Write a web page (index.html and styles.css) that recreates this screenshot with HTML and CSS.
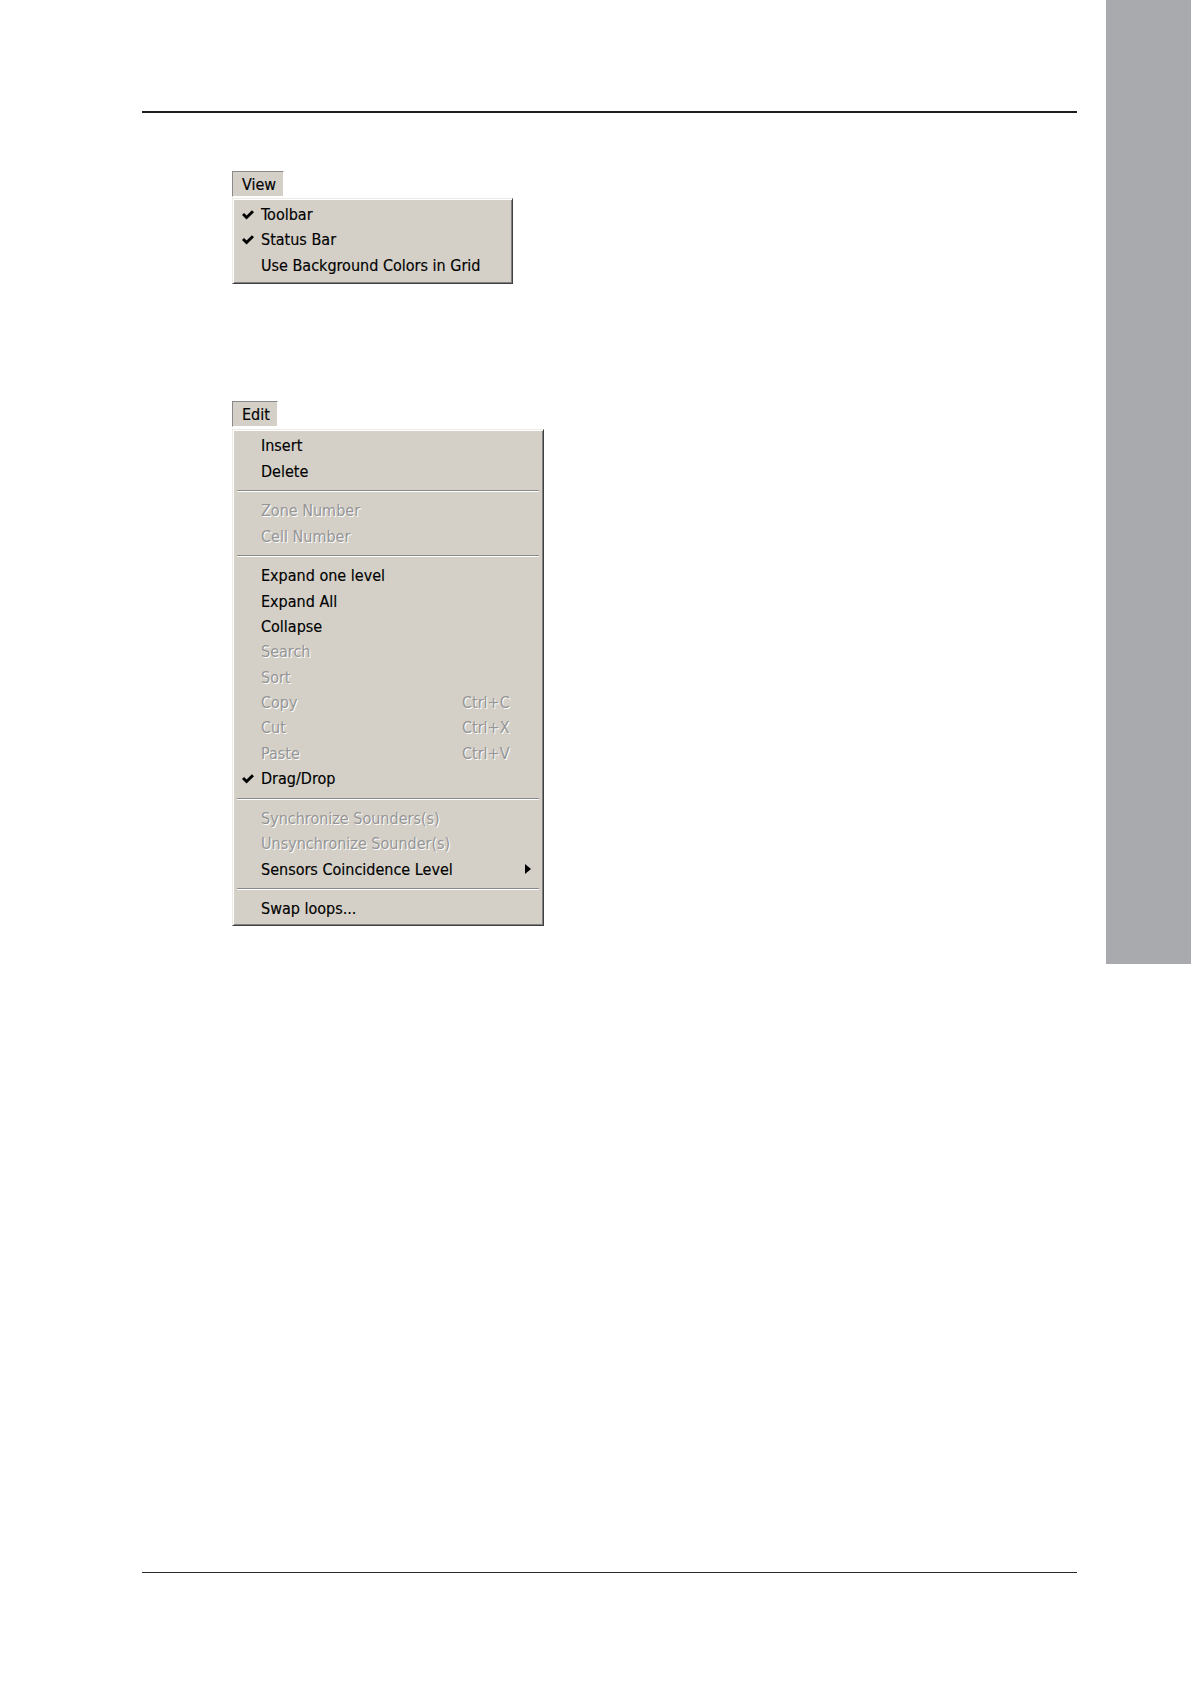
FILE: index.html
```html
<!DOCTYPE html>
<html lang="en">
<head>
<meta charset="utf-8">
<title>View and Edit menus</title>
<link rel="stylesheet" href="styles.css">
</head>
<body>
<div class="page">
  <main class="content">
    <div class="rule rule-top"></div>

    <figure class="menu-shot shot-view">
      <div class="menu-tab">View</div>
      <div class="menu menu-view">
        <div class="item"><span class="check"><svg viewBox="0 0 10 8" width="12" height="10"><polygon points="0,4 1.7,2.3 3.8,4.4 8.3,0 10,1.7 3.8,7.8"/></svg></span><span class="label">Toolbar</span></div>
        <div class="item"><span class="check"><svg viewBox="0 0 10 8" width="12" height="10"><polygon points="0,4 1.7,2.3 3.8,4.4 8.3,0 10,1.7 3.8,7.8"/></svg></span><span class="label">Status Bar</span></div>
        <div class="item"><span class="label">Use Background Colors in Grid</span></div>
      </div>
    </figure>

    <figure class="menu-shot shot-edit">
      <div class="menu-tab">Edit</div>
      <div class="menu menu-edit">
        <div class="item"><span class="label">Insert</span></div>
        <div class="item"><span class="label">Delete</span></div>
        <div class="sep"></div>
        <div class="item disabled"><span class="label">Zone Number</span></div>
        <div class="item disabled"><span class="label">Cell Number</span></div>
        <div class="sep"></div>
        <div class="item"><span class="label">Expand one level</span></div>
        <div class="item"><span class="label">Expand All</span></div>
        <div class="item"><span class="label">Collapse</span></div>
        <div class="item disabled"><span class="label">Search</span></div>
        <div class="item disabled"><span class="label">Sort</span></div>
        <div class="item disabled"><span class="label">Copy</span><span class="shortcut">Ctrl+C</span></div>
        <div class="item disabled"><span class="label">Cut</span><span class="shortcut">Ctrl+X</span></div>
        <div class="item disabled"><span class="label">Paste</span><span class="shortcut">Ctrl+V</span></div>
        <div class="item"><span class="check"><svg viewBox="0 0 10 8" width="12" height="10"><polygon points="0,4 1.7,2.3 3.8,4.4 8.3,0 10,1.7 3.8,7.8"/></svg></span><span class="label">Drag/Drop</span></div>
        <div class="sep"></div>
        <div class="item disabled"><span class="label">Synchronize Sounders(s)</span></div>
        <div class="item disabled"><span class="label">Unsynchronize Sounder(s)</span></div>
        <div class="item"><span class="label">Sensors Coincidence Level</span><span class="submenu-arrow"></span></div>
        <div class="sep"></div>
        <div class="item"><span class="label">Swap loops...</span></div>
      </div>
    </figure>

    <div class="rule rule-bottom"></div>
  </main>
  <aside class="side-tab"></aside>
</div>
</body>
</html>
```

FILE: styles.css
```css
html, body {
  margin: 0;
  padding: 0;
  background: #ffffff;
}

.page {
  display: flex;
  align-items: flex-start;
  width: 1191px;
  min-height: 1684px;
}

.content {
  flex: 1;
  display: flex;
  flex-direction: column;
  align-items: flex-start;
  padding: 111px 29px 0 142px;
}

.side-tab {
  flex: none;
  width: 85px;
  height: 964px;
  background: #a9aaae;
}

.rule {
  align-self: stretch;
  background: #1e1e1e;
}

.rule-top {
  height: 2px;
}

.rule-bottom {
  height: 1.5px;
  margin-top: 646px;
  background: #2a2a2a;
}

.menu-shot {
  margin: 0 0 0 90px;
  display: flex;
  flex-direction: column;
  align-items: flex-start;
  font-family: "DejaVu Sans Condensed", "DejaVu Sans", "Liberation Sans", sans-serif;
  font-stretch: condensed;
  font-size: 16px;
  color: #000;
  -webkit-text-stroke: 0.15px currentColor;
}

.shot-view {
  margin-top: 58px;
}

.shot-edit {
  margin-top: 117px;
}

.menu-tab {
  box-sizing: border-box;
  height: 26px;
  line-height: 22px;
  padding: 2px 7px 0 9px;
  background: #d4d0c8;
  border: 1px solid;
  border-color: #8a8a8a #ffffff #ffffff #8a8a8a;
}

.shot-view .menu-tab {
  margin-bottom: 1px;
}

.shot-edit .menu-tab {
  margin-bottom: 2px;
}

.menu {
  box-sizing: border-box;
  padding: 3px 1px;
  background: #d4d0c8;
  border: 1px solid;
  border-color: #ecebe6 #404040 #404040 #ecebe6;
  box-shadow: inset 1px 1px 0 #ffffff, inset -1px -1px 0 #808080;
}

.menu-view {
  width: 281px;
  padding-top: 3px;
  padding-bottom: 5px;
}

.menu-edit {
  width: 312px;
}

.item {
  display: grid;
  grid-template-columns: 27px 1fr 80px;
  align-items: center;
  height: 25.4px;
  line-height: 25.4px;
  white-space: nowrap;
}

.check {
  grid-column: 1;
  display: flex;
  align-items: center;
  padding-left: 8px;
}

.check svg {
  display: block;
  fill: #000;
}

.label {
  grid-column: 2;
}

.shortcut {
  grid-column: 3;
}

.disabled {
  color: #959595;
  text-shadow: 1px 1px 0 #ffffff;
  -webkit-text-stroke: 0;
}

.submenu-arrow {
  grid-column: 3;
  justify-self: end;
  margin-right: 11px;
  width: 0;
  height: 0;
  border-left: 6px solid #000;
  border-top: 5px solid transparent;
  border-bottom: 5px solid transparent;
}

.sep {
  display: flex;
  align-items: center;
  height: 14.2px;
  margin: 0 3px;
}

.sep::before {
  content: "";
  flex: 1;
  border-top: 1px solid #8a8a8a;
  border-bottom: 1px solid #ffffff;
}
```
